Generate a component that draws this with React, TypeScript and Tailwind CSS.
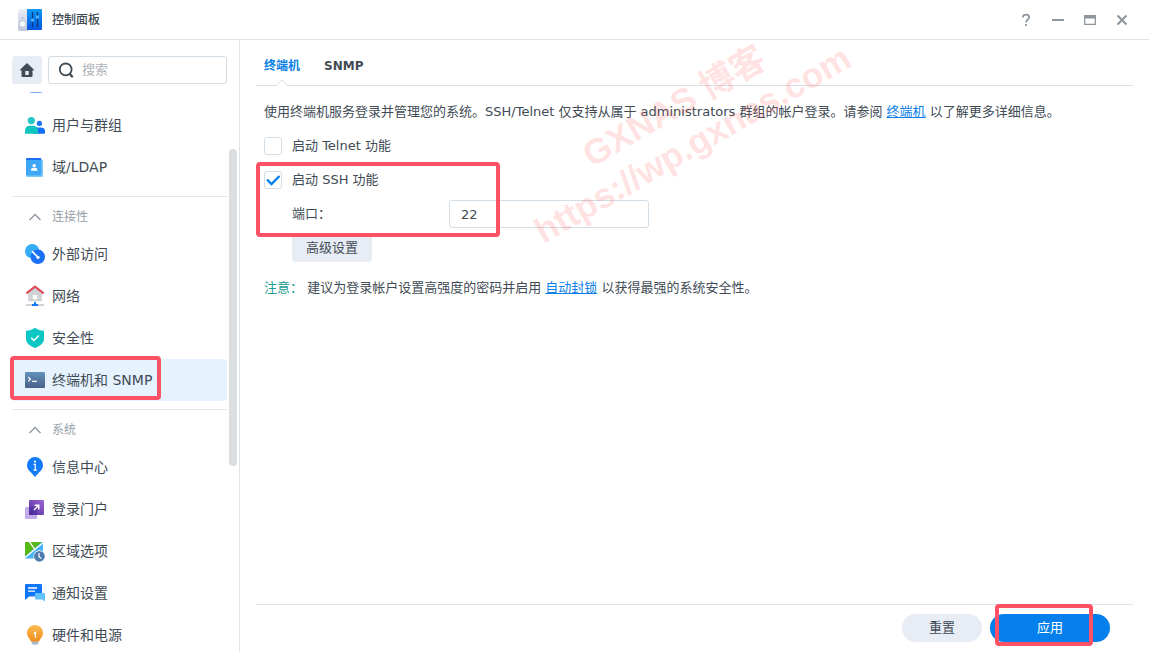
import { useState } from "react";
import type { ReactNode } from "react";

function Icon({ children }: { children: ReactNode }) {
  return (
    <svg viewBox="0 0 22 22" className="size-[22px] shrink-0" aria-hidden="true">
      {children}
    </svg>
  );
}

const UsersIcon = () => (
  <Icon>
    <circle cx="15.4" cy="9.4" r="2.6" fill="#1f74f5" />
    <path d="M9 19.8v-2.2a4 4 0 0 1 4-4h4a4 4 0 0 1 4 4v1.2a1 1 0 0 1-1 1z" fill="#1470fa" />
    <circle cx="7.3" cy="6.6" r="3.6" fill="#25c8c6" />
    <path d="M1 19.8v-3.3a4.8 4.8 0 0 1 4.8-4.8h3.4a4.8 4.8 0 0 1 4.8 4.8v3.3z" fill="#10c5c0" />
  </Icon>
);

const DirectoryIcon = () => (
  <Icon>
    <rect x="2" y="2" width="15.4" height="8" rx="1" fill="#1d6ff2" />
    <path d="M2 4h16a1 1 0 0 1 1 1v15a1 1 0 0 1-1 1H3a1 1 0 0 1-1-1z" fill="#7fcbfb" />
    <path d="M2 4h14.5a1 1 0 0 1 1 1v13.5a1 1 0 0 1-1 1H2z" fill="#3fa7f8" />
    <circle cx="10.2" cy="9.6" r="1.7" fill="#fff" />
    <path d="M7 14.8v-.9a2.2 2.2 0 0 1 2.2-2.2h2a2.2 2.2 0 0 1 2.2 2.2v.9z" fill="#fff" />
  </Icon>
);

const ExternalIcon = () => (
  <Icon>
    <circle cx="8.2" cy="8.2" r="7.2" fill="#35aef5" />
    <circle cx="13.8" cy="13.8" r="7.2" fill="#1b70f6" />
    <path d="M8.4 8.7l5 5" stroke="#fff" strokeWidth="1.7" strokeLinecap="round" />
    <circle cx="14" cy="14.3" r="1.6" fill="#fff" />
  </Icon>
);

const NetworkIcon = () => (
  <Icon>
    <path d="M4.2 8L11 2.4 17.8 8v8.2H4.2z" fill="#cfd2d7" />
    <rect x="8.8" y="10" width="4.4" height="4.2" rx=".6" fill="#fff" />
    <path d="M2.4 8.4L11 1.6l8.6 6.8" stroke="#dc4b57" strokeWidth="2" fill="none" strokeLinejoin="round" />
    <path d="M2 20h18" stroke="#cfd2d7" strokeWidth="2" />
    <path d="M8 19h2v-2h2v2h2v2H8z" fill="#0e76f7" />
  </Icon>
);

const ShieldIcon = () => (
  <Icon>
    <path d="M11 .8c2.6 1.9 5.6 2.8 9 2.9v8.1c0 4.6-4.4 7.6-9 9.3-4.6-1.7-9-4.7-9-9.3V3.7c3.4-.1 6.4-1 9-2.9z" fill="#0bc6c3" />
    <path d="M7.2 10.8l2.7 2.700 5-5" stroke="#fff" strokeWidth="1.5" fill="none" />
  </Icon>
);

const TerminalIcon = () => (
  <Icon>
    <defs>
      <linearGradient id="terminal" x1="0" y1="0" x2="0" y2="1">
        <stop offset="0" stopColor="#6392bb" />
        <stop offset="1" stopColor="#486189" />
      </linearGradient>
    </defs>
    <rect x="1" y="3" width="20" height="16" rx="1" fill="url(#terminal)" />
    <path d="M4.2 8l2.2 2.2-2.2 2.2M8 12.4h4.8" stroke="#fff" strokeWidth="1.2" fill="none" />
  </Icon>
);

const InfoIcon = () => (
  <Icon>
    <path d="M11 1a8 8 0 0 1 8 8.200c0 3.4-1.9 5.4-4 7.3L11 21l-4-4.5c-2.1-1.9-4-3.9-4-7.3A8 8 0 0 1 11 1z" fill="#137bfa" />
    <circle cx="11" cy="5.6" r="1.1" fill="#fff" />
    <path d="M9.500 8.4H11.300v5.8M9.400 14.2h3.6" stroke="#fff" strokeWidth="1.2" fill="none" />
  </Icon>
);

const PortalIcon = () => (
  <Icon>
    <defs>
      <linearGradient id="portal" x1="1" y1="0" x2="0" y2="1">
        <stop offset="0" stopColor="#9f66d6" />
        <stop offset="1" stopColor="#4f2f9b" />
      </linearGradient>
    </defs>
    <rect x="1" y="9" width="12" height="12" rx="1" fill="#c3ace9" />
    <rect x="5" y="2" width="15" height="15" rx="1" fill="url(#portal)" />
    <path d="M5 9h7a1 1 0 0 1 1 1v7H6a1 1 0 0 1-1-1z" fill="#472a96" opacity=".5" />
    <path d="M10 12l4.500-4.500M10.600 7.200h4.200v4.200" stroke="#fff" strokeWidth="1.400" fill="none" />
  </Icon>
);

const RegionIcon = () => (
  <Icon>
    <rect x="1" y="2" width="18" height="16.4" rx="1" fill="#45b2f5" />
    <path d="M1 3a1 1 0 0 1 1-1h16L1 16.500z" fill="#58b818" />
    <path d="M1 17.500L19 2.800M5.500 1.800l5 7.200" stroke="#fff" strokeWidth="1.3" />
    <circle cx="15.4" cy="16.300" r="6" fill="#fff" />
    <circle cx="15.4" cy="16.300" r="5.4" fill="#4e7caf" />
    <path d="M15 13v3.600l2.400 2" stroke="#fff" strokeWidth="1.2" fill="none" />
  </Icon>
);

const NotificationIcon = () => (
  <Icon>
    <path d="M2 2h15a1 1 0 0 1 1 1v11.500H5L1 18V3a1 1 0 0 1 1-1z" fill="#1175f8" />
    <path d="M4 6h9M4 9.200h7" stroke="#fff" strokeWidth="1.3" />
    <path d="M12 11h8a1 1 0 0 1 1 1v7.500L18.200 17.600H12a1 1 0 0 1-1-1V12a1 1 0 0 1 1-1z" fill="#62c0fa" />
  </Icon>
);

const BulbIcon = () => (
  <Icon>
    <defs>
      <linearGradient id="bulb" x1="0" y1="0" x2="0" y2="1">
        <stop offset="0" stopColor="#f8bc51" />
        <stop offset="1" stopColor="#f48d1c" />
      </linearGradient>
    </defs>
    <path d="M7.600 17h6.800v1.700a2 2 0 0 1-2 2H9.600a2 2 0 0 1-2-2z" fill="#aebac7" />
    <path d="M11 1a8 8 0 0 1 8 8c0 3-1.600 4.600-2.800 6.200-.7 1-.8 2.300-1.800 2.300H7.600c-1 0-1.100-1.300-1.800-2.300C4.600 13.600 3 12 3 9a8 8 0 0 1 8-8z" fill="url(#bulb)" />
    <path d="M9.800 9.600l1.600-1v5.200" stroke="#fff" strokeWidth="1.400" fill="none" />
  </Icon>
);

const PanelLogo = () => (
  <svg viewBox="0 0 24 22" className="h-[22px] w-6" aria-hidden="true">
    <defs>
      <linearGradient id="panel" x1="0" y1="0" x2="0" y2="1">
        <stop offset="0" stopColor="#0d9bf5" />
        <stop offset="1" stopColor="#0754dc" />
      </linearGradient>
      <linearGradient id="panelSide" x1="0" y1="0" x2="0" y2="1">
        <stop offset="0" stopColor="#e9edf7" />
        <stop offset="1" stopColor="#bcc5dc" />
      </linearGradient>
    </defs>
    <path d="M2 0h8v22H2a2 2 0 0 1-2-2V2a2 2 0 0 1 2-2z" fill="url(#panelSide)" />
    <circle cx="4.6" cy="15" r="3.2" fill="#f7f8fc" stroke="#aeb8cf" strokeWidth=".6" />
    <circle cx="4.6" cy="9" r=".7" fill="#8f9bb5" />
    <path d="M9 0h14a1 1 0 0 1 1 1v19a1 1 0 0 1-1 1H9z" fill="url(#panel)" />
    <path d="M14.500 3v15M19.500 3v15" stroke="#07357f" strokeWidth="1.2" />
    <circle cx="14.500" cy="11" r="1.7" fill="#4fb3fb" />
    <circle cx="19.500" cy="8" r="1.7" fill="#4fb3fb" />
  </svg>
);

interface Entry {
  label: string;
  icon: ReactNode;
  active?: boolean;
}

const accounts: Entry[] = [
  { label: "用户与群组", icon: <UsersIcon /> },
  { label: "域/LDAP", icon: <DirectoryIcon /> },
];

const connectivity: Entry[] = [
  { label: "外部访问", icon: <ExternalIcon /> },
  { label: "网络", icon: <NetworkIcon /> },
  { label: "安全性", icon: <ShieldIcon /> },
  { label: "终端机和 SNMP", icon: <TerminalIcon />, active: true },
];

const system: Entry[] = [
  { label: "信息中心", icon: <InfoIcon /> },
  { label: "登录门户", icon: <PortalIcon /> },
  { label: "区域选项", icon: <RegionIcon /> },
  { label: "通知设置", icon: <NotificationIcon /> },
  { label: "硬件和电源", icon: <BulbIcon /> },
];

function EntryList({ entries }: { entries: Entry[] }) {
  return (
    <ul>
      {entries.map((entry) => (
        <li key={entry.label} className="relative">
          <a
            href="#"
            aria-current={entry.active ? "page" : undefined}
            className={`flex h-[42px] items-center gap-1.5 rounded pl-3 text-sm whitespace-nowrap ${
              entry.active ? "bg-[#e6f2fd]" : ""
            }`}
          >
            {entry.icon}
            {entry.label}
          </a>
          {entry.active && <Highlight className="-top-[3px] -left-0.5 h-11 w-[151px]" />}
        </li>
      ))}
    </ul>
  );
}

function Section({ title, entries }: { title: string; entries: Entry[] }) {
  return (
    <section className="mt-2 border-t border-[#e0e7ee]">
      <button type="button" className="flex h-9 w-full items-center gap-1.5 pt-1 pl-3 text-xs text-[#97a0a8]">
        <svg viewBox="0 0 22 22" className="size-[22px]" aria-hidden="true">
          <path d="M5.500 14l5.500-5.500 5.500 5.500" stroke="#949ca4" strokeWidth="1.5" fill="none" />
        </svg>
        {title}
      </button>
      <EntryList entries={entries} />
    </section>
  );
}

function Highlight({ className }: { className: string }) {
  return (
    <span aria-hidden="true" className={`pointer-events-none absolute z-10 rounded border-4 border-[#fd5265] ${className}`} />
  );
}

function Checkbox({ label, checked, onChange }: { label: string; checked: boolean; onChange: (value: boolean) => void }) {
  return (
    <label className="flex h-[34px] items-center gap-2.5">
      <span className="relative size-[18px]">
        <input
          type="checkbox"
          checked={checked}
          onChange={(event) => onChange(event.target.checked)}
          className="block size-[18px] appearance-none rounded-[3px] border border-[#d3dde5] bg-white"
        />
        {checked && (
          <svg viewBox="0 0 18 18" className="pointer-events-none absolute inset-0" aria-hidden="true">
            <path d="M3 8.500l4.500 4.500L15.500 5" stroke="#057feb" strokeWidth="2.400" fill="none" />
          </svg>
        )}
      </span>
      {label}
    </label>
  );
}

export default function App() {
  const [telnet, setTelnet] = useState(false);
  const [ssh, setSsh] = useState(true);
  const [port, setPort] = useState("22");

  return (
    <div className="flex h-screen flex-col overflow-hidden bg-white font-['DejaVu_Sans','Noto_Sans_CJK_SC',sans-serif] text-[13px] leading-5 text-[#414b55]">
      <header className="flex h-10 shrink-0 items-center border-b border-[#dce5ec] pr-[11px] pl-[18px]">
        <PanelLogo />
        <h1 className="ml-2.5 flex-1 text-xs font-medium">控制面板</h1>
        <div className="flex text-[#8f979e]">
          <button type="button" aria-label="帮助" className="flex size-8 items-center justify-center">
            <svg viewBox="0 0 16 16" className="size-4" fill="none" stroke="currentColor" strokeWidth="1.800" aria-hidden="true">
              <path d="M4.800 5.400C4.800 3.600 6 2.700 8 2.700s3.200 1 3.200 2.600C11.200 7.400 8 7.500 8 10.500M8 12v2" />
            </svg>
          </button>
          <button type="button" aria-label="最小化" className="flex size-8 items-center justify-center">
            <svg viewBox="0 0 16 16" className="size-4" aria-hidden="true">
              <path d="M2 8h12" stroke="currentColor" strokeWidth="2" />
            </svg>
          </button>
          <button type="button" aria-label="最大化" className="flex size-8 items-center justify-center">
            <svg viewBox="0 0 16 16" className="size-4" aria-hidden="true">
              <path d="M2 3h12v10H2zM3.300 6.500v5.200h9.400V6.500z" fill="currentColor" fillRule="evenodd" />
            </svg>
          </button>
          <button type="button" aria-label="关闭" className="flex size-8 items-center justify-center">
            <svg viewBox="0 0 16 16" className="size-4" aria-hidden="true">
              <path d="M3.500 3.500l9 9M12.500 3.500l-9 9" stroke="currentColor" strokeWidth="2.200" />
            </svg>
          </button>
        </div>
      </header>

      <div className="flex min-h-0 flex-1">
        <aside className="relative flex w-60 shrink-0 flex-col border-r border-[#dce5ec] pt-4">
          <div className="flex shrink-0 gap-1.5 px-3">
            <button type="button" aria-label="主页" className="flex h-7 w-[30px] items-center justify-center rounded-[3px] bg-[#e8edf5]">
              <svg viewBox="0 0 16 16" className="size-4" fill="#414b55" aria-hidden="true">
                <path d="M8 1L.5 8.200h2V14a1 1 0 0 0 1 1h9a1 1 0 0 0 1-1V8.200h2zM6.300 9h3.400v4H6.300z" fillRule="evenodd" />
              </svg>
            </button>
            <label className="flex h-7 min-w-0 flex-1 items-center gap-2 rounded-[3px] border border-[#d3dde5] pl-[9px]">
              <svg viewBox="0 0 16 16" className="size-4 shrink-0" fill="none" stroke="#414b55" strokeWidth="1.800" aria-hidden="true">
                <circle cx="7.700" cy="7.400" r="5.900" />
                <path d="M11.500 11.500l3.200 3.700" strokeWidth="2.200" />
              </svg>
              <input type="search" aria-label="搜索" placeholder="搜索" className="w-full min-w-0 outline-none placeholder:text-[#b0b4b8]" />
            </label>
          </div>
          <nav className="mt-2 min-h-0 flex-1 overflow-hidden px-3">
            <div className="-mt-[3px] h-[15px] pl-4">
              <div className="h-1 w-4 rounded-b-sm border-b border-[#7eaeea]" />
            </div>
            <EntryList entries={accounts} />
            <Section title="连接性" entries={connectivity} />
            <Section title="系统" entries={system} />
          </nav>
          <div className="absolute top-[109px] right-0.5 h-[317px] w-2 rounded-full bg-[#dcdddf]" />
        </aside>

        <main className="relative flex min-w-0 flex-1 flex-col px-4">
          <div role="tablist" className="flex h-[46px] shrink-0 items-start gap-6 border-b border-[#d8e0e9] px-2 pt-4 text-xs leading-5 font-bold">
            <button type="button" role="tab" aria-selected="true" className="relative h-[30px] pb-2.5 text-[#0a7fe6]">
              终端机
              <svg viewBox="0 0 12 7" className="absolute bottom-0 left-3 h-[7px] w-3" aria-hidden="true">
                <path d="M0 7L6 1l6 6z" fill="#fff" />
                <path d="M0 6.500L6 1l6 5.500" fill="none" stroke="#d8e0e9" />
              </svg>
            </button>
            <button type="button" role="tab" aria-selected="false" className="h-[30px] pb-2.5">SNMP</button>
          </div>

          <form id="terminal-form" className="min-h-0 flex-1 overflow-hidden pt-[9px]">
            <p className="flex h-[34px] items-center px-2 whitespace-pre">
              使用终端机服务登录并管理您的系统。SSH/Telnet 仅支持从属于 administrators 群组的帐户登录。请参阅{" "}
              <a href="#" className="text-[#0a7fe6] underline">终端机</a> 以了解更多详细信息。
            </p>
            <div className="px-2">
              <Checkbox label="启动 Telnet 功能" checked={telnet} onChange={setTelnet} />
            </div>
            <div className="relative px-2">
              <Checkbox label="启动 SSH 功能" checked={ssh} onChange={setSsh} />
              <div className="flex h-[34px] items-center pl-7">
                <label htmlFor="port" className="w-[157px]">端口：</label>
                <input
                  id="port"
                  type="text"
                  value={port}
                  onChange={(event) => setPort(event.target.value)}
                  className="h-7 w-[200px] rounded-[3px] border border-[#d3dde5] px-[11px] outline-none"
                />
              </div>
              <Highlight className="-top-px left-0 h-[75px] w-[244px]" />
            </div>
            <div className="flex h-[34px] items-center pl-9">
              <button type="button" className="h-7 w-20 rounded-[3px] bg-[#e8edf5]">高级设置</button>
            </div>
            <p className="mt-1.5 flex h-[34px] items-center px-2 whitespace-pre">
              <span className="text-[#1a9c91]">注意：</span> 建议为登录帐户设置高强度的密码并启用{" "}
              <a href="#" className="text-[#0a7fe6] underline">自动封锁</a> 以获得最强的系统安全性。
            </p>
          </form>

          <footer className="flex h-12 shrink-0 items-start justify-end gap-2 border-t border-[#dce5ec] pt-[9px] pr-[23px]">
            <button type="reset" form="terminal-form" className="h-7 w-20 rounded-full bg-[#e8edf5]">重置</button>
            <div className="relative">
              <button type="button" className="block h-7 w-[120px] rounded-full bg-[#057feb] text-white">应用</button>
              <Highlight className="-top-2.5 left-[5px] h-[42px] w-[98px]" />
            </div>
          </footer>

          <div className="pointer-events-none absolute top-11 left-[263px] -rotate-30 font-['Liberation_Sans','Noto_Sans_CJK_SC',sans-serif] text-[35px] leading-[42px] font-bold whitespace-nowrap text-[#ff4646]/18">
            <div className="pl-20">GXNAS 博客</div>
            <div>https://wp.gxnas.com</div>
          </div>
        </main>
      </div>
    </div>
  );
}
